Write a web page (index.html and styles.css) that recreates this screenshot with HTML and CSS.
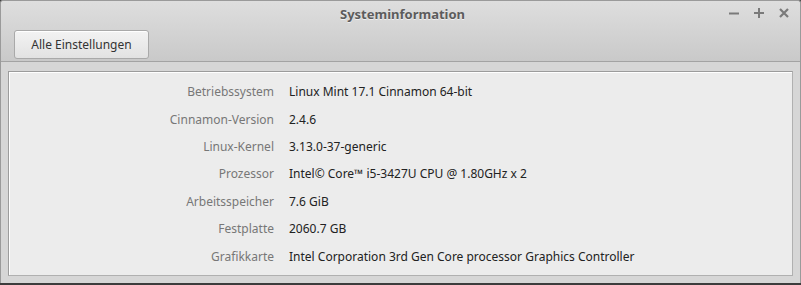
FILE: index.html
```html
<!DOCTYPE html>
<html lang="de">
<head>
    <meta charset="UTF-8">
    <title>Systeminformation</title>
    <link rel="stylesheet" href="styles.css">
</head>
<body>
    <div class="window">
        <header class="titlebar">
            <div class="title-row">
                <span class="title">Systeminformation</span>
                <div class="controls">
                    <svg width="12" height="12" viewBox="0 0 12 12"><path d="M1 6.5h10" stroke="#7a7a7a" stroke-width="2"/></svg>
                    <svg width="12" height="12" viewBox="0 0 12 12"><path d="M1 6h10M6 1v10" stroke="#7a7a7a" stroke-width="2"/></svg>
                    <svg width="12" height="12" viewBox="0 0 12 12"><path d="M2 2l8 8M10 2l-8 8" stroke="#7a7a7a" stroke-width="2.2"/></svg>
                </div>
            </div>
            <div class="toolbar">
                <button class="btn">Alle Einstellungen</button>
            </div>
        </header>

        <main class="content">
            <div class="panel">
                <div class="row"><span class="label">Betriebssystem</span><span class="value">Linux Mint 17.1 Cinnamon 64-bit</span></div>
                <div class="row"><span class="label">Cinnamon-Version</span><span class="value">2.4.6</span></div>
                <div class="row"><span class="label">Linux-Kernel</span><span class="value">3.13.0-37-generic</span></div>
                <div class="row"><span class="label">Prozessor</span><span class="value">Intel© Core™ i5-3427U CPU @ 1.80GHz x 2</span></div>
                <div class="row"><span class="label">Arbeitsspeicher</span><span class="value">7.6 GiB</span></div>
                <div class="row"><span class="label">Festplatte</span><span class="value">2060.7 GB</span></div>
                <div class="row"><span class="label">Grafikkarte</span><span class="value">Intel Corporation 3rd Gen Core processor Graphics Controller</span></div>
            </div>
        </main>
    </div>
</body>
</html>
```

FILE: styles.css
```css
html, body {
    margin: 0;
    padding: 0;
}

body {
    font-family: "Noto Sans", "DejaVu Sans", sans-serif;
    font-size: 12px;
    background-color: #3c3c3c;
    width: 801px;
    height: 285px;
    overflow: hidden;
}

.window {
    width: 799px;
    height: 282px;
    border: 1px solid #9a9a9a;
    border-bottom: none;
    border-radius: 3px 3px 0 0;
    background-color: #d6d6d6;
    display: flex;
    flex-direction: column;
}

.titlebar {
    height: 64px;
    background: linear-gradient(#dedede, #c9c9c9);
    border-bottom: 1px solid #a3a3a3;
    border-radius: 3px 3px 0 0;
}

.title-row {
    height: 27px;
    display: flex;
    align-items: center;
    justify-content: center;
    position: relative;
}

.title {
    font-size: 13px;
    font-weight: bold;
    color: #5c5c5c;
    text-shadow: 0 1px 0 rgba(255, 255, 255, 0.6);
    margin-left: 4px;
    margin-top: -1px;
}

.controls {
    position: absolute;
    right: 10px;
    top: 6px;
    display: flex;
    gap: 13px;
}

.toolbar {
    padding: 2px 13px;
}

.btn {
    font-family: inherit;
    font-size: 12px;
    color: #333;
    width: 135px;
    height: 29px;
    border: 1px solid #a9a9a9;
    border-radius: 3px;
    background: linear-gradient(#f3f3f3, #e2e2e2);
    box-shadow: inset 0 1px 0 #fff;
    padding: 0;
}

.content {
    flex: 1;
    padding: 9px 7px 9px 7px;
}

.panel {
    height: 197px;
    background-color: #ececec;
    border: 1px solid #9c9c9c;
    border-right-color: #b0b0b0;
    border-bottom-color: #b0b0b0;
    box-shadow: inset 1px 1px 0 #fff;
    padding-top: 6px;
}

.row {
    display: flex;
    height: 27.4px;
    align-items: center;
}

.label {
    width: 265px;
    text-align: right;
    color: #777;
}

.value {
    margin-left: 15px;
    color: #222;
}
```
